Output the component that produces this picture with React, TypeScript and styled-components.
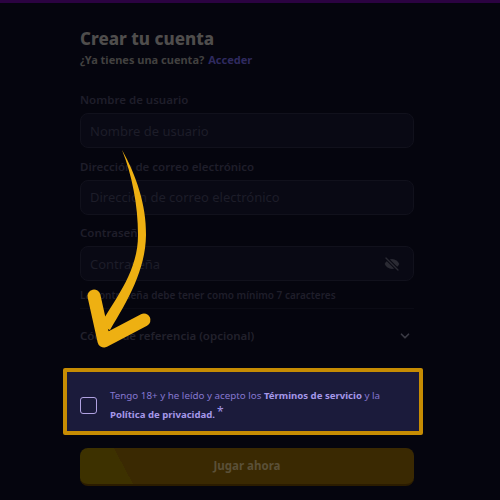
import styled, { createGlobalStyle } from "styled-components";
import { ChevronDown } from "lucide-react";

const Global = createGlobalStyle`
  html, body {
    margin: 0;
    padding: 0;
    background: #05050e;
  }
  * {
    box-sizing: border-box;
  }
`;

const Page = styled.div`
  position: relative;
  width: 500px;
  height: 500px;
  overflow: hidden;
  background: #05050e;
  border-top: 3px solid #2b0341;
  font-family: "Noto Sans", sans-serif;
`;

const Form = styled.form`
  display: flex;
  flex-direction: column;
  width: 334px;
  margin-left: 80px;
  padding-top: 24px;
`;

const Title = styled.h1`
  margin: 0;
  font-size: 17px;
  line-height: 24px;
  font-weight: 800;
  color: #4f4d4c;
`;

const Subtitle = styled.p`
  margin: 0 0 22px;
  font-size: 11px;
  line-height: 17px;
  font-weight: 700;
  color: #424140;
`;

const Accent = styled.span`
  margin-left: 4px;
  color: #2f2a5f;
`;

const Field = styled.div`
  display: flex;
  flex-direction: column;
  row-gap: 3px;
  margin-bottom: 8.5px;
`;

const Label = styled.label`
  font-size: 11.5px;
  line-height: 20px;
  font-weight: 600;
  color: #1f1e2a;
`;

const InputBox = styled.div`
  display: flex;
  align-items: center;
  justify-content: space-between;
  height: 35px;
  padding: 0 12px 0 9px;
  border: 1px solid #11111c;
  border-radius: 8px;
  background: #090914;
  font-size: 13px;
  color: #1d1d29;
`;

const Hint = styled.p`
  margin: -2px 0 0;
  padding-bottom: 5px;
  border-bottom: 1px solid #0b0b15;
  font-size: 10px;
  line-height: 15px;
  font-weight: 600;
  color: #1f1e2a;
`;

const Referral = styled.div`
  display: flex;
  align-items: center;
  justify-content: space-between;
  height: 54px;
  margin-bottom: 5px;
  padding-right: 2px;
  font-size: 11.5px;
  font-weight: 600;
  color: #22212c;
`;

const Consent = styled.div`
  display: flex;
  align-items: center;
  column-gap: 13px;
  height: 67px;
  margin: 0 -9px 0 -17px;
  padding: 8px 12px 0 13px;
  border: 4px solid #c68c03;
  border-radius: 2px;
  background: #1b1b3b;
`;

const CheckBox = styled.span`
  flex: none;
  width: 17px;
  height: 17px;
  border: 1px solid #b1a2e2;
  border-radius: 3px;
`;

const ConsentText = styled.p`
  margin: 0;
  font-size: 9.8px;
  line-height: 19.5px;
  color: #8577cf;
`;

const Strong = styled.strong`
  font-weight: 700;
  font-size: 9.6px;
  color: #a597e8;
`;

const Asterisk = styled.span`
  position: relative;
  top: -2px;
  margin-left: 2px;
  font-size: 12px;
  line-height: 1;
  color: #a597e8;
`;

const Submit = styled.button`
  display: block;
  width: 334px;
  height: 38px;
  margin-top: 13px;
  padding: 0;
  border: none;
  border-bottom: 2px solid #2b1c00;
  border-radius: 8px;
  background: linear-gradient(62deg, #3d3100 0 15%, #3a2902 15% 100%);
  font-family: inherit;
  font-size: 11.5px;
  font-weight: 700;
  color: #5a5038;
`;

const ArrowOverlay = styled.svg`
  position: absolute;
  left: 0;
  top: -3px;
  pointer-events: none;
`;

const SlashedEye = () => (
  <svg width="18" height="16" viewBox="0 0 24 24" fill="#2a2a33">
    <path d="M12 4.500c-5 0-9 3.200-11 7.500 2 4.300 6 7.500 11 7.500s9-3.200 11-7.500c-2-4.300-6-7.500-11-7.500z" />
    <path d="M3 3l18 18" stroke="#090914" strokeWidth="5" />
    <path d="M3 3l18 18" stroke="#2a2a33" strokeWidth="2" strokeLinecap="round" />
  </svg>
);

const App = () => {
  return (
    <Page>
      <Global />
      <Form>
        <Title>Crear tu cuenta</Title>
        <Subtitle>
          ¿Ya tienes una cuenta?<Accent>Acceder</Accent>
        </Subtitle>
        <Field>
          <Label>Nombre de usuario</Label>
          <InputBox>Nombre de usuario</InputBox>
        </Field>
        <Field>
          <Label>Dirección de correo electrónico</Label>
          <InputBox>Dirección de correo electrónico</InputBox>
        </Field>
        <Field>
          <Label>Contraseña</Label>
          <InputBox>
            Contraseña
            <SlashedEye />
          </InputBox>
        </Field>
        <Hint>La contraseña debe tener como mínimo 7 caracteres</Hint>
        <Referral>
          Código de referencia (opcional)
          <ChevronDown size={14} color="#3a3a44" strokeWidth={3} />
        </Referral>
        <Consent>
          <CheckBox />
          <ConsentText>
            Tengo 18+ y he leído y acepto los <Strong>Términos de servicio</Strong> y la{" "}
            <Strong>Política de privacidad.</Strong>
            <Asterisk>*</Asterisk>
          </ConsentText>
        </Consent>
        <Submit type="button">Jugar ahora</Submit>
      </Form>
      <ArrowOverlay width="500" height="500" viewBox="0 0 500 500">
        <path
          d="M122 150 C136 175 146.500 205 146 235 C145.500 270 128 300 110 330 L100 325 C118 295 138 270 138 235 C138 205 132 175 122 150 Z"
          fill="#eeb012"
        />
        <path
          d="M94 296 L104 341 L144 320"
          fill="none"
          stroke="#eeb012"
          strokeWidth="13"
          strokeLinecap="round"
          strokeLinejoin="round"
        />
      </ArrowOverlay>
    </Page>
  );
};

export default App;
